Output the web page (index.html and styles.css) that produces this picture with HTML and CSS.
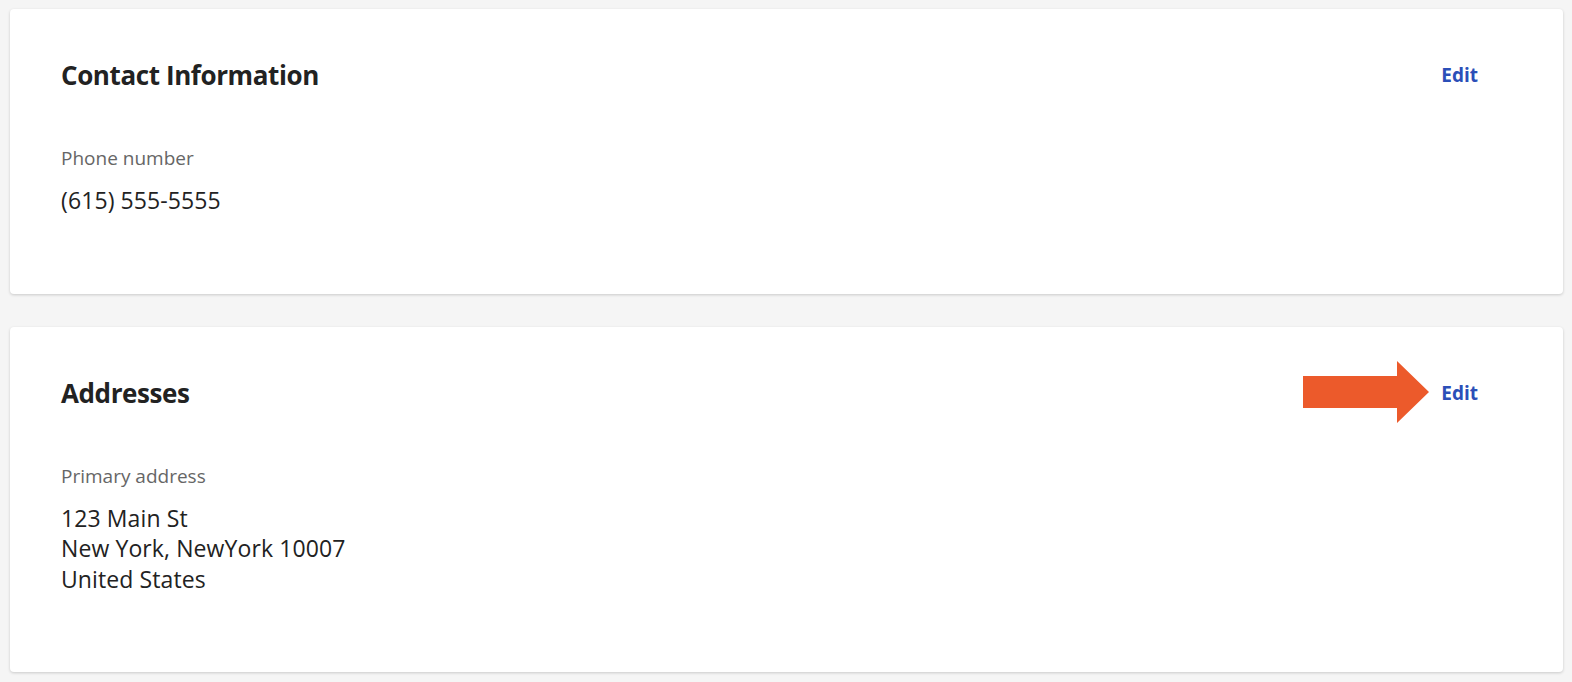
FILE: index.html
```html
<!DOCTYPE html>
<html lang="en">
<head>
    <meta charset="UTF-8">
    <meta name="viewport" content="width=device-width, initial-scale=1.0">
    <title>Account details</title>
    <link rel="stylesheet" href="styles.css">
</head>
<body>
    <div class="page">
        <section class="card">
            <div class="card-header">
                <h2>Contact Information</h2>
                <a href="#" class="edit-link">Edit</a>
            </div>
            <div class="field-label">Phone number</div>
            <div class="field-value">(615) 555-5555</div>
        </section>

        <section class="card">
            <div class="card-header">
                <h2>Addresses</h2>
                <div class="edit-wrap">
                    <!-- callout arrow pointing at the edit link -->
                    <svg class="callout-arrow" width="127" height="62" viewBox="0 0 127 62">
                        <polygon points="0,15 94,15 94,0 126,31 94,62 94,47 0,47" fill="#ec5a2b"/>
                    </svg>
                    <a href="#" class="edit-link">Edit</a>
                </div>
            </div>
            <div class="field-label">Primary address</div>
            <div class="field-value">
                123 Main St<br>
                New York, NewYork 10007<br>
                United States
            </div>
        </section>
    </div>
</body>
</html>
```

FILE: styles.css
```css
body {
    margin: 0;
    background-color: #f5f5f5;
    font-family: "Open Sans", Lato, sans-serif;
    color: #222;
}

.page {
    display: flex;
    flex-direction: column;
    gap: 33px;
    padding: 9px 9px 10px 10px;
}

.card {
    background-color: #fff;
    border-radius: 4px;
    box-shadow: 0 1px 3px rgba(0, 0, 0, 0.18);
    padding: 50px 85px 78px 51px;
}

.card-header {
    display: flex;
    justify-content: space-between;
    align-items: center;
    height: 32px;
    margin-bottom: 55px;
}

h2 {
    margin: 0;
    font-size: 26px;
    line-height: 32px;
    font-weight: 700;
    letter-spacing: -0.4px;
    color: #222;
}

.edit-wrap {
    position: relative;
}

.edit-link {
    display: block;
    color: #2b4fb8;
    font-weight: 700;
    font-size: 19px;
    text-decoration: none;
}

.callout-arrow {
    position: absolute;
    right: calc(100% + 11px);
    top: 50%;
    margin-top: -32px;
}

.field-label {
    font-size: 19px;
    line-height: 24px;
    color: #666;
    margin-bottom: 15px;
}

.field-value {
    font-size: 23px;
    line-height: 30.5px;
    letter-spacing: 0.1px;
    color: #222;
}
```
